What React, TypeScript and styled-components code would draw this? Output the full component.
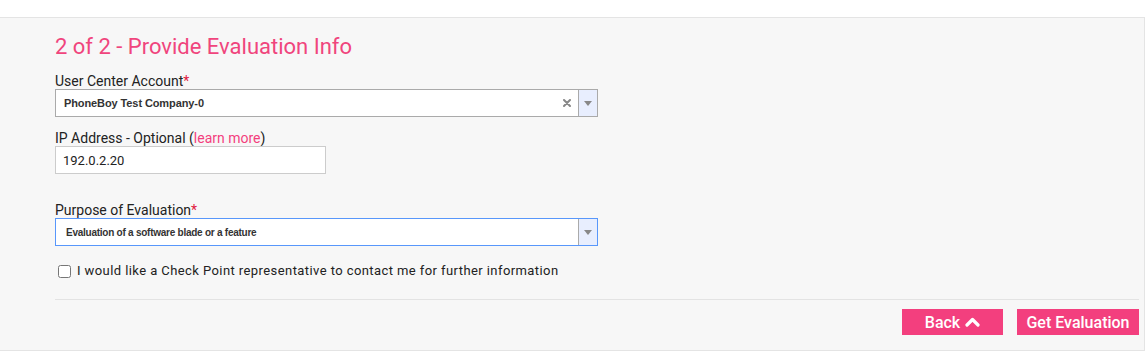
import styled, { createGlobalStyle } from "styled-components";

const GlobalStyle = createGlobalStyle`
	body {
		margin: 0;
		background: #ffffff;
		font-family: Roboto, "Liberation Sans", sans-serif;
		color: #222;
	}
`;

const pink = "#f33f7e";

const ClearIcon = () => (
	<svg width="8" height="8" viewBox="0 0 8 8">
		<path d="M1 1 L7 7 M7 1 L1 7" stroke="#888" strokeWidth="2" strokeLinecap="round" />
	</svg>
);

const ArrowDown = () => (
	<svg width="8" height="5" viewBox="0 0 8 5">
		<path d="M0 0 H8 L4 5 Z" fill="#888" />
	</svg>
);

const ChevronUp = () => (
	<svg width="15" height="10" viewBox="0 0 15 10">
		<path d="M2 8 L7.5 2.5 L13 8" stroke="#fff" strokeWidth="3.2" fill="none" strokeLinecap="round" strokeLinejoin="round" />
	</svg>
);

type SelectProps = { value: string; focused?: boolean; clearable?: boolean; compact?: boolean };

const Select = ({ value, focused, clearable, compact }: SelectProps) => (
	<SelectBox $focused={focused}>
		<SelectValue $compact={compact}>{value}</SelectValue>
		{clearable && (
			<ClearButton>
				<ClearIcon />
			</ClearButton>
		)}
		<ArrowBox>
			<ArrowDown />
		</ArrowBox>
	</SelectBox>
);

export default function App() {
	return (
		<>
			<GlobalStyle />
			<TopBand />
			<Panel>
				<Title>2 of 2 - Provide Evaluation Info</Title>

				<Field $gap={15}>
					<Label>
						User Center Account<Req>*</Req>
					</Label>
					<Select value="PhoneBoy Test Company-0" clearable />
				</Field>

				<Field $gap={14}>
					<Label>
						IP Address - Optional (<LearnMore href="#">learn more</LearnMore>)
					</Label>
					<TextInput defaultValue="192.0.2.20" />
				</Field>

				<Field $gap={29}>
					<Label>
						Purpose of Evaluation<Req>*</Req>
					</Label>
					<Select value="Evaluation of a software blade or a feature" focused compact />
				</Field>

				<CheckRow>
					<input type="checkbox" />
					<span>I would like a Check Point representative to contact me for further information</span>
				</CheckRow>

				<Divider />

				<Actions>
					<PinkButton $width={101}>
						Back <ChevronUp />
					</PinkButton>
					<PinkButton $width={122}>Get Evaluation</PinkButton>
				</Actions>
			</Panel>
		</>
	);
}

const TopBand = styled.div`
	height: 17px;
`;

const Panel = styled.section`
	width: 1145px;
	box-sizing: border-box;
	height: 334px;
	background: #f7f7f7;
	border-top: 1px solid #e4e4e4;
	border-right: 1px solid #e4e4e4;
	border-bottom: 1px solid #e4e4e4;
	padding: 0 5px 0 55px;
	display: flex;
	flex-direction: column;
`;

const Title = styled.h2`
	margin: 17px 0 0;
	font-size: 22px;
	line-height: 24px;
	font-weight: 400;
	color: #f0457d;
`;

const Field = styled.div<{ $gap: number }>`
	display: flex;
	flex-direction: column;
	margin-top: ${({ $gap }) => $gap}px;
`;

const Label = styled.label`
	font-size: 14px;
	line-height: 15px;
	color: #222;
`;

const Req = styled.span`
	color: #e0193f;
`;

const LearnMore = styled.a`
	color: ${pink};
	text-decoration: none;
`;

const SelectBox = styled.div<{ $focused?: boolean }>`
	width: 543px;
	height: 28px;
	box-sizing: border-box;
	background: #fff;
	border: 1px solid ${({ $focused }) => ($focused ? "#5897fb" : "#aaa")};
	display: flex;
	align-items: stretch;
`;

const SelectValue = styled.div<{ $compact?: boolean }>`
	flex: 1;
	display: flex;
	align-items: center;
	padding-left: ${({ $compact }) => ($compact ? 10 : 8)}px;
	font-family: "Liberation Sans", Arial, sans-serif;
	font-size: ${({ $compact }) => ($compact ? 10 : 11)}px;
	letter-spacing: ${({ $compact }) => ($compact ? -0.25 : -0.1)}px;
	font-weight: 700;
	color: #333;
`;

const ClearButton = styled.div`
	width: 22px;
	display: flex;
	align-items: center;
	justify-content: center;
`;

const ArrowBox = styled.div`
	width: 18px;
	background: #e8eefe;
	border-left: 1px solid #aaa;
	display: flex;
	align-items: center;
	justify-content: center;
`;

const TextInput = styled.input`
	width: 271px;
	height: 28px;
	box-sizing: border-box;
	border: 1px solid #ccc;
	background: #fff;
	padding: 0 7px;
	font-family: Roboto, "Liberation Sans", sans-serif;
	font-size: 13px;
	color: #222;
	outline: none;
`;

const CheckRow = styled.label`
	display: flex;
	align-items: center;
	gap: 6px;
	margin-top: 17px;
	font-size: 13px;
	line-height: 16px;
	letter-spacing: 0.42px;
	color: #222;

	input {
		margin: 0 0 0 3px;
		width: 13px;
		height: 13px;
	}
`;

const Divider = styled.hr`
	margin: 20px 0 0;
	border: none;
	border-top: 1px solid #e3e3e3;
	height: 0;
`;

const Actions = styled.div`
	display: flex;
	justify-content: flex-end;
	gap: 14px;
	margin-top: 9px;
`;

const PinkButton = styled.button<{ $width: number }>`
	width: ${({ $width }) => $width}px;
	height: 26px;
	border: none;
	background: ${pink};
	color: #fff;
	font-family: Roboto, "Liberation Sans", sans-serif;
	font-size: 16px;
	font-weight: 500;
	display: flex;
	align-items: center;
	justify-content: center;
	gap: 5px;
	padding: 0;
	cursor: pointer;
`;
